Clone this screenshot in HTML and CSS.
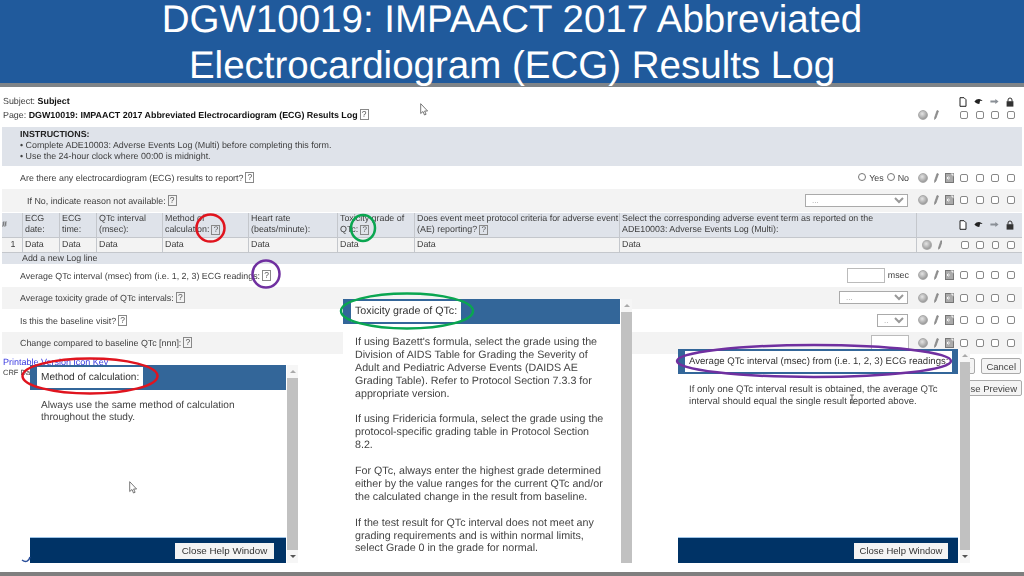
FILE: index.html
```html
<!DOCTYPE html>
<html lang="en">

<head>
    <meta charset="UTF-8">
    <title>DGW10019: IMPAACT 2017 Abbreviated Electrocardiogram (ECG) Results Log</title>
    <link rel="stylesheet" href="styles.css">
</head>

<body>
    <svg class="defs" width="0" height="0">
        <symbol id="i-page" viewBox="0 0 8 10">
            <path d="M1 .7h4l2 2v6.6H1z" fill="#fff" stroke="#222" stroke-width="1" />
        </symbol>
        <symbol id="i-eye" viewBox="0 0 11 8">
            <path d="M.5 4C2 1.6 4 .8 6 .8s3.500 1.200 4.500 2.700L7.500 3.200 6.500 7C4 6.800 2 6 .5 4z" fill="#222" />
        </symbol>
        <symbol id="i-arrow" viewBox="0 0 11 8">
            <path d="M.5 2.800h6V.8L10.500 4 6.500 7.200v-2h-6z" fill="#8a8f96" />
        </symbol>
        <symbol id="i-lock" viewBox="0 0 8 10">
            <path d="M2 4.500V3a2 2 0 0 1 4 0v1.500" fill="none" stroke="#333" stroke-width="1" />
            <rect x=".6" y="4.200" width="6.800" height="5.400" fill="#333" />
        </symbol>
        <symbol id="i-pencil" viewBox="0 0 5 10">
            <path d="M3 .5l1.500.5-2.500 7L.6 9.500.6 7.500z" fill="#999" stroke="#666" stroke-width=".5" />
        </symbol>
        <symbol id="i-note" viewBox="0 0 9 10">
            <rect x=".5" y=".5" width="8" height="9" fill="#aaa" stroke="#777" />
            <path d="M2 5h3M2 5l1.500-1.500M2 5l1.500 1.500" fill="none" stroke="#fff" stroke-width=".8" />
            <path d="M5.500 .5h3v3z" fill="#eee" />
        </symbol>
        <symbol id="i-cursor" viewBox="0 0 8 13">
            <path d="M.7.7v9.800l2.300-2 1.500 3.500 1.600-.7-1.500-3.300h3z" fill="#fff" stroke="#555" stroke-width=".8" />
        </symbol>
    </svg>

    <header class="slide-head">
        <h1>DGW10019: IMPAACT 2017 Abbreviated<br>Electrocardiogram (ECG) Results Log</h1>
    </header>

    <main class="crf">
        <div class="page-info">
            <div class="page-text">
                <div>Subject: <b>Subject</b></div>
                <div>Page: <b>DGW10019: IMPAACT 2017 Abbreviated Electrocardiogram (ECG) Results Log</b><span class="q">?</span></div>
            </div>
            <div class="page-tools">
                <div class="head-icons">
                    <svg class="ic-page"><use href="#i-page" /></svg>
                    <svg class="ic-wide"><use href="#i-eye" /></svg>
                    <svg class="ic-wide"><use href="#i-arrow" /></svg>
                    <svg class="ic-page"><use href="#i-lock" /></svg>
                </div>
                <div class="tools no-note">
                    <span class="ball"></span>
                    <svg class="ic-pencil"><use href="#i-pencil" /></svg>
                    <span class="note-gap"></span>
                    <input type="checkbox" class="box"><input type="checkbox" class="box"><input type="checkbox" class="box"><input type="checkbox" class="box">
                </div>
            </div>
        </div>

        <div class="instructions">
            <b>INSTRUCTIONS:</b><br>
            • Complete ADE10003: Adverse Events Log (Multi) before completing this form.<br>
            • Use the 24-hour clock where 00:00 is midnight.
        </div>

        <div class="row row-tall">
            <div class="label">Are there any electrocardiogram (ECG) results to report?<span class="q">?</span></div>
            <div class="control">
                <input type="radio" class="radio" name="any"><span>Yes</span>
                <input type="radio" class="radio" name="any"><span>No</span>
            </div>
            <div class="tools">
                <span class="ball"></span>
                <svg class="ic-pencil"><use href="#i-pencil" /></svg>
                <svg class="ic-note"><use href="#i-note" /></svg>
                <input type="checkbox" class="box"><input type="checkbox" class="box"><input type="checkbox" class="box"><input type="checkbox" class="box">
            </div>
        </div>

        <div class="row row-alt">
            <div class="label label-sub">If No, indicate reason not available:<span class="q">?</span></div>
            <div class="control"><select class="pick pick-long"><option>...</option></select></div>
            <div class="tools">
                <span class="ball"></span>
                <svg class="ic-pencil"><use href="#i-pencil" /></svg>
                <svg class="ic-note"><use href="#i-note" /></svg>
                <input type="checkbox" class="box"><input type="checkbox" class="box"><input type="checkbox" class="box"><input type="checkbox" class="box">
            </div>
        </div>

        <div class="log">
            <div class="log-head">
                <div class="cell cell-num">#</div>
                <div class="cell">ECG date:</div>
                <div class="cell">ECG time:</div>
                <div class="cell">QTc interval (msec):</div>
                <div class="cell">Method of calculation:<span class="q">?</span></div>
                <div class="cell">Heart rate (beats/minute):</div>
                <div class="cell">Toxicity grade of QTc:<span class="q">?</span></div>
                <div class="cell">Does event meet protocol criteria for adverse event (AE) reporting?<span class="q">?</span></div>
                <div class="cell">Select the corresponding adverse event term as reported on the ADE10003: Adverse Events Log (Multi):</div>
                <div class="cell head-icons log-icons">
                    <svg class="ic-page"><use href="#i-page" /></svg>
                    <svg class="ic-wide"><use href="#i-eye" /></svg>
                    <svg class="ic-wide"><use href="#i-arrow" /></svg>
                    <svg class="ic-page"><use href="#i-lock" /></svg>
                </div>
            </div>
            <div class="log-row">
                <div class="cell cell-num">1</div>
                <div class="cell">Data</div>
                <div class="cell">Data</div>
                <div class="cell">Data</div>
                <div class="cell">Data</div>
                <div class="cell">Data</div>
                <div class="cell">Data</div>
                <div class="cell">Data</div>
                <div class="cell">Data</div>
                <div class="cell tools log-tools">
                    <span class="ball"></span>
                    <svg class="ic-pencil"><use href="#i-pencil" /></svg>
                    <span class="note-gap"></span>
                    <input type="checkbox" class="box"><input type="checkbox" class="box"><input type="checkbox" class="box"><input type="checkbox" class="box">
                </div>
            </div>
            <div class="log-add">Add a new Log line</div>
        </div>

        <div class="row row-tall">
            <div class="label">Average QTc interval (msec) from (i.e. 1, 2, 3) ECG readings:<span class="q">?</span></div>
            <div class="control"><input type="text" class="num"><span class="unit">msec</span></div>
            <div class="tools">
                <span class="ball"></span>
                <svg class="ic-pencil"><use href="#i-pencil" /></svg>
                <svg class="ic-note"><use href="#i-note" /></svg>
                <input type="checkbox" class="box"><input type="checkbox" class="box"><input type="checkbox" class="box"><input type="checkbox" class="box">
            </div>
        </div>

        <div class="row row-alt">
            <div class="label">Average toxicity grade of QTc intervals:<span class="q">?</span></div>
            <div class="control"><select class="pick pick-mid"><option>...</option></select></div>
            <div class="tools">
                <span class="ball"></span>
                <svg class="ic-pencil"><use href="#i-pencil" /></svg>
                <svg class="ic-note"><use href="#i-note" /></svg>
                <input type="checkbox" class="box"><input type="checkbox" class="box"><input type="checkbox" class="box"><input type="checkbox" class="box">
            </div>
        </div>

        <div class="row">
            <div class="label">Is this the baseline visit?<span class="q">?</span></div>
            <div class="control"><select class="pick pick-short"><option>...</option></select></div>
            <div class="tools">
                <span class="ball"></span>
                <svg class="ic-pencil"><use href="#i-pencil" /></svg>
                <svg class="ic-note"><use href="#i-note" /></svg>
                <input type="checkbox" class="box"><input type="checkbox" class="box"><input type="checkbox" class="box"><input type="checkbox" class="box">
            </div>
        </div>

        <div class="row row-alt">
            <div class="label">Change compared to baseline QTc [nnn]:<span class="q">?</span></div>
            <div class="control"><input type="text" class="num"></div>
            <div class="tools">
                <span class="ball"></span>
                <svg class="ic-pencil"><use href="#i-pencil" /></svg>
                <svg class="ic-note"><use href="#i-note" /></svg>
                <input type="checkbox" class="box"><input type="checkbox" class="box"><input type="checkbox" class="box"><input type="checkbox" class="box">
            </div>
        </div>

        <div class="crf-foot">
            <div class="foot-links">
                <div><a href="#">Printable Version</a> <a href="#">Icon Key</a></div>
                <div class="crf-note">CRF Data</div>
            </div>
            <div class="foot-btns">
                <div class="btn-line">
                    <button class="btn">Save</button>
                    <button class="btn">Cancel</button>
                </div>
                <button class="btn">Close Preview</button>
            </div>
        </div>
    </main>

    <footer class="slide-foot"></footer>

    <!-- help popups -->
    <section class="help help-left">
        <div class="help-main">
            <div class="help-title"><span>Method of calculation:</span></div>
            <div class="help-body">
                <p>Always use the same method of calculation throughout the study.</p>
            </div>
            <div class="help-foot"><button class="help-close">Close Help Window</button></div>
        </div>
        <div class="scroll"><i class="up"></i><div class="thumb"></div><i class="down"></i></div>
    </section>

    <section class="help help-mid">
        <div class="help-main">
            <div class="help-title"><span>Toxicity grade of QTc:</span></div>
            <div class="help-body">
                <p>If using Bazett's formula, select the grade using the Division of AIDS Table for Grading the Severity of Adult and Pediatric Adverse Events (DAIDS AE Grading Table). Refer to Protocol Section 7.3.3 for appropriate version.</p>
                <p>If using Fridericia formula, select the grade using the protocol-specific grading table in Protocol Section 8.2.</p>
                <p>For QTc, always enter the highest grade determined either by the value ranges for the current QTc and/or the calculated change in the result from baseline.</p>
                <p>If the test result for QTc interval does not meet any grading requirements and is within normal limits, select Grade 0 in the grade for normal.</p>
            </div>
        </div>
        <div class="scroll"><i class="up"></i><div class="thumb"></div></div>
    </section>

    <section class="help help-right">
        <div class="help-main">
            <div class="help-title"><span>Average QTc interval (msec) from (i.e. 1, 2, 3) ECG readings:</span></div>
            <div class="help-body">
                <p>If only one QTc interval result is obtained, the average QTc interval should equal the single result reported above.</p>
            </div>
            <div class="help-foot"><button class="help-close">Close Help Window</button></div>
        </div>
        <div class="scroll"><i class="up"></i><div class="thumb"></div><i class="down"></i></div>
    </section>

    <!-- hand drawn marks and mouse pointers on top of the capture -->
    <svg class="marks" viewBox="0 0 1024 576">
        <ellipse cx="210.500" cy="228" rx="14" ry="13.500" class="m-red" />
        <ellipse cx="363" cy="228" rx="12" ry="13" class="m-green" />
        <ellipse cx="266" cy="274" rx="13.500" ry="13.500" class="m-purple" />
        <ellipse cx="407" cy="311" rx="66" ry="17.500" class="m-green" />
        <ellipse cx="90" cy="376" rx="67.500" ry="17.500" class="m-red" />
        <ellipse cx="814" cy="361" rx="137" ry="16" class="m-purple" />
        <use href="#i-cursor" x="420" y="103" width="8" height="13" />
        <use href="#i-cursor" x="129" y="481" width="8" height="13" />
        <path d="M850 395h4M852 395v8M850 403h4" fill="none" stroke="#444" stroke-width=".8" />
        <path d="M30 557c-1 4-4 6-8 3" fill="none" stroke="#2a4f9a" stroke-width="1.500" />
    </svg>
</body>

</html>
```

FILE: styles.css
```css
* {
    box-sizing: border-box;
}

body {
    position: relative;
    display: flex;
    flex-direction: column;
    width: 1024px;
    height: 576px;
    margin: 0;
    overflow: hidden;
    background-color: #fff;
    color: #404040;
    font-family: "Liberation Sans", Arial, sans-serif;
    font-size: 8.900px;
    text-rendering: geometricPrecision;
}

a {
    color: #3a3ae0;
    text-decoration: none;
}

.defs {
    position: absolute;
}

/* slide title */
.slide-head {
    flex: none;
    height: 87px;
    background-color: #205a9c;
    border-bottom: 4px solid #7f8488;
}

h1 {
    position: relative;
    top: -3px;
    margin: 0;
    color: #fff;
    font-size: 38.500px;
    font-weight: normal;
    line-height: 46px;
    text-align: center;
}

.slide-foot {
    flex: none;
    height: 4px;
    background-color: #7f7f7f;
}

/* form */
.crf {
    flex: 1;
    min-height: 0;
    overflow: hidden;
    filter: blur(.3px);
}

.page-info {
    display: flex;
    justify-content: space-between;
    height: 40px;
    padding: 8px 2px 0 3px;
}

.page-text {
    line-height: 13.500px;
}

.page-text b {
    color: #111;
}

.page-tools {
    width: 106px;
}

.page-tools .tools {
    margin-top: 2px;
}

.q {
    display: inline-block;
    width: 9px;
    height: 11px;
    margin-left: 2px;
    border: 1px solid #888;
    color: #555;
    font-size: 8.500px;
    line-height: 9px;
    text-align: center;
    vertical-align: 1px;
}

.log-head .q {
    height: 10px;
    font-size: 8px;
    line-height: 8px;
    vertical-align: 0;
}

.instructions {
    height: 39px;
    margin: 0 2px;
    padding: 2px 18px;
    background-color: #dfe3ea;
    line-height: 11px;
}

.instructions b {
    color: #222;
}

.row {
    display: flex;
    align-items: center;
    height: 22.500px;
    margin: 0 2px;
}

.row-tall {
    height: 23px;
}

.row-alt {
    background-color: #f3f3f3;
}

.label {
    flex: 1;
    padding-left: 18px;
}

.label-sub {
    padding-left: 25px;
}

.control {
    display: flex;
    align-items: center;
    gap: 3px;
    padding-right: 7px;
}

.radio {
    width: 8px;
    height: 8px;
    margin: 0 0 2px;
}

.pick {
    height: 13px;
    margin-right: 1px;
    padding: 0 2px;
    color: #999;
    font-family: inherit;
    font-size: 8px;
    background-color: #fff;
    border: 1px solid #aaa;
}

.pick-long {
    width: 103px;
}

.pick-mid {
    width: 69px;
}

.pick-short {
    width: 31px;
}

.num {
    width: 38px;
    height: 15px;
    border: 1px solid #bbb;
}

/* icons on the right of each row */
.tools {
    display: flex;
    flex: none;
    align-items: center;
    width: 106px;
    padding-left: 2px;
}

.ball {
    width: 10px;
    height: 10px;
    border: 1px solid #aaa;
    border-radius: 50%;
    background: radial-gradient(circle at 40% 35%, #e4e4e4, #9a9a9a 75%);
}

.ic-pencil {
    width: 5px;
    height: 10px;
    margin: 0 6px;
}

.ic-note {
    width: 9px;
    height: 10px;
    margin-right: 6px;
}

.note-gap {
    width: 15px;
}

.box {
    appearance: none;
    width: 8px;
    height: 8px;
    margin: 0 7.500px 0 0;
    background-color: #fff;
    border: 1px solid #888;
    border-radius: 2px;
}

.head-icons {
    display: flex;
    align-items: center;
    justify-content: flex-end;
    gap: 7px;
    height: 13px;
    padding-right: 8px;
}

.ic-page {
    width: 8px;
    height: 10px;
}

.ic-wide {
    width: 9px;
    height: 7px;
}

/* log table */
.log {
    margin: 1px 2px 0;
}

.log-head,
.log-row {
    display: grid;
    grid-template-columns: 20px 37px 37px 66px 86px 89px 77px 205px 297px 106px;
}

.log-head {
    height: 25px;
    background-color: #dfe3ea;
    border-bottom: 1px solid #c4c7cc;
    line-height: 11.500px;
}

.log-row {
    height: 15px;
    background-color: #f3f3f3;
    border-bottom: 1px solid #c4c7cc;
    line-height: 13px;
}

.cell {
    padding: 0 0 0 2px;
    border-left: 1px solid #c4c7cc;
}

.cell-num {
    border-left: 0;
    text-align: center;
}

.log-head .cell-num {
    padding: 6px 0 0;
    text-align: left;
}

.log-icons {
    height: auto;
    padding-right: 8px;
}

.log-tools {
    padding: 0 0 0 5px;
}

.log-tools .note-gap {
    width: 13px;
}

.log-add {
    height: 11px;
    padding-left: 20px;
    background-color: #dfe3ea;
    line-height: 11px;
}

/* links and buttons under the form */
.crf-foot {
    display: flex;
    justify-content: space-between;
    padding: 3px 2px 0 3px;
}

.foot-links {
    font-size: 8px;
    line-height: 10px;
}

.foot-links a {
    font-size: 9px;
}

.crf-note {
    font-size: 7.500px;
}

.foot-btns {
    display: flex;
    flex-direction: column;
    align-items: flex-end;
    gap: 6px;
    margin-top: 1px;
}

.btn-line {
    display: flex;
    gap: 6px;
    margin-right: 1px;
}

.btn {
    height: 16px;
    padding: 0 4px;
    background-color: #f4f4f4;
    border: 1px solid #aaa;
    border-radius: 2px;
    color: #444;
    font-family: inherit;
    font-size: 9.500px;
}

/* help popups */
.help {
    position: absolute;
    display: flex;
    background-color: #fff;
    filter: blur(.3px);
}

.help-left {
    left: 30px;
    top: 365px;
    width: 268px;
    height: 198px;
    font-size: 10.100px;
}

.help-mid {
    left: 343px;
    top: 299px;
    width: 289px;
    height: 264px;
    font-size: 10.700px;
}

.help-right {
    left: 678px;
    top: 349px;
    width: 292px;
    height: 214px;
    font-size: 9.600px;
}

.help-main {
    display: flex;
    flex: 1;
    flex-direction: column;
    min-width: 0;
}

.help-title {
    flex: none;
    height: 25px;
    padding: 2px 0 2px 7px;
    background-color: #336699;
}

.help-mid .help-title {
    padding-left: 8px;
}

.help-title span {
    display: inline-block;
    height: 21px;
    padding: 0 4px;
    background-color: #fff;
    color: #333;
    line-height: 21px;
    white-space: nowrap;
}

.help-body {
    flex: 1;
    padding: 10px 14px 0 11px;
    color: #444;
    line-height: 12px;
}

.help-mid .help-body {
    padding: 12px 14px 0 12px;
    line-height: 12.900px;
}

.help-body p {
    margin: 0 0 12.900px;
}

.help-foot {
    display: flex;
    flex: none;
    align-items: center;
    justify-content: flex-end;
    height: 26px;
    padding-right: 12px;
    background-color: #003366;
    border-top: 1px solid #9cc3e6;
}

.help-right .help-foot {
    padding-right: 10px;
}

.help-close {
    width: 99px;
    height: 16px;
    padding: 0;
    background-color: #f4f4f4;
    border: 0;
    color: #333;
    font-family: inherit;
    font-size: 9.800px;
}

.help-right .help-close {
    width: 94px;
    font-size: 9.500px;
}

.scroll {
    display: flex;
    flex: none;
    flex-direction: column;
    align-items: center;
    width: 11px;
    margin-left: 1px;
    background-color: #f6f6f6;
}

.help-right .scroll {
    width: 10px;
    margin-left: 2px;
}

.thumb {
    flex: 1;
    width: 100%;
    background-color: #c1c1c1;
}

.up,
.down {
    flex: none;
    width: 0;
    height: 0;
    margin: 5px 0;
    border-left: 3px solid transparent;
    border-right: 3px solid transparent;
}

.up {
    border-bottom: 3px solid #aaa;
}

.down {
    border-top: 3px solid #555;
}

/* annotations */
.marks {
    position: absolute;
    left: 0;
    top: 0;
    width: 1024px;
    height: 576px;
    pointer-events: none;
}

.marks ellipse {
    fill: none;
    stroke-width: 2.500;
}

.m-red {
    stroke: #e0141e;
}

.m-green {
    stroke: #0aa650;
}

.m-purple {
    stroke: #7030a0;
}
```
